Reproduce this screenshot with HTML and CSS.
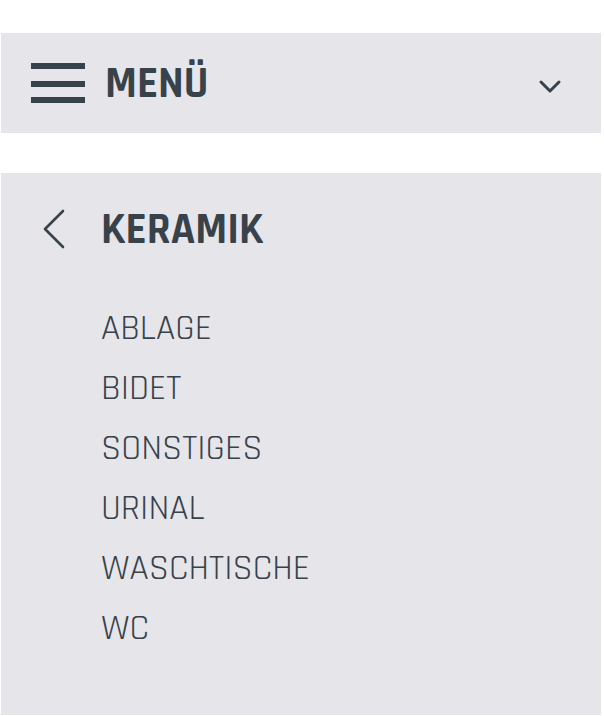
FILE: index.html
```html
<!DOCTYPE html>
<html lang="de">
<head>
<meta charset="utf-8">
<meta name="viewport" content="width=device-width, initial-scale=1">
<title>Keramik</title>
<link rel="stylesheet" href="styles.css">
</head>
<body>
<header>
<button class="menu-bar" type="button">
<svg class="burger" width="54" height="40" viewBox="0 0 54 40" aria-hidden="true"><path d="M0 0h54v6H0zM0 18h54v6H0zM0 34h54v6H0z"/></svg>
<span class="menu-label">MENÜ</span>
<svg class="line-icon chevron" width="24" height="16" viewBox="0 0 24 16" aria-hidden="true"><path d="M3 3l9 9 9-9" stroke-width="3"/></svg>
</button>
</header>
<nav class="panel" aria-labelledby="category">
<div class="panel-head">
<button class="back" type="button" aria-label="Zurück"><svg class="line-icon" width="24" height="40" viewBox="0 0 24 40" aria-hidden="true"><path d="M21 2L3 20l18 18" stroke-width="2.6"/></svg></button>
<h1 id="category">KERAMIK</h1>
</div>
<ul class="links">
<li><a href="#ablage">ABLAGE</a></li>
<li><a href="#bidet">BIDET</a></li>
<li><a href="#sonstiges">SONSTIGES</a></li>
<li><a href="#urinal">URINAL</a></li>
<li><a href="#waschtische">WASCHTISCHE</a></li>
<li><a href="#wc">WC</a></li>
</ul>
</nav>
</body>
</html>
```
FILE: styles.css
```css
* {
  box-sizing: border-box;
}

body {
  margin: 33px 3px 0 1px;
  background: #fff;
  color: #37424a;
  font-family: Rajdhani, Roboto, sans-serif;
}

button {
  padding: 0;
  border: 0;
  background: none;
  color: inherit;
  font: inherit;
  cursor: pointer;
}

.menu-bar {
  display: flex;
  align-items: center;
  width: 100%;
  height: 100px;
  padding: 0 39px 0 30px;
  background: #e6e5ea;
}

.burger {
  fill: currentColor;
}

.menu-label,
h1 {
  margin: 0;
  padding-top: 2px;
  font-size: 44px;
  font-weight: 700;
  line-height: 48px;
}

.menu-label {
  margin-left: 20px;
}

.line-icon {
  display: block;
  fill: none;
  stroke: currentColor;
  stroke-linecap: round;
  stroke-linejoin: round;
}

.chevron {
  margin: 7px 0 0 auto;
}

.panel {
  margin-top: 40px;
  padding: 31px 41px 56px;
  background: #e6e5ea;
}

.panel-head {
  display: flex;
  align-items: center;
  gap: 35px;
}

.links {
  margin: 45px 0 0;
  padding: 0 0 0 59px;
  list-style: none;
}

.links a {
  display: block;
  color: inherit;
  font-size: 36px;
  font-weight: 400;
  line-height: 60px;
  text-decoration: none;
}
```
